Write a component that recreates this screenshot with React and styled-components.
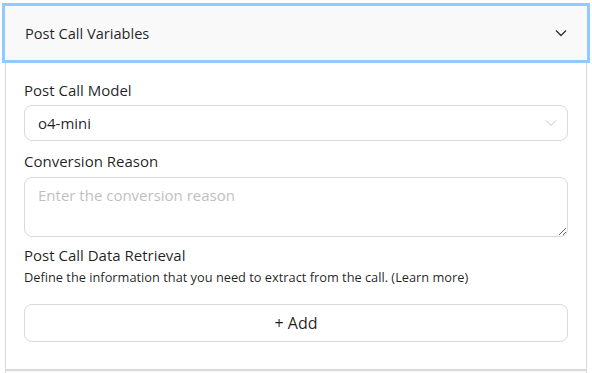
import React from "react";
import styled, { createGlobalStyle } from "styled-components";

const GlobalStyle = createGlobalStyle`
  html, body {
    margin: 0;
    padding: 0;
    background: #ffffff;
  }
  body {
    font-family: "Open Sans", "Noto Sans", sans-serif;
    color: rgba(0, 0, 0, 0.88);
  }
`;

const Page = styled.div`
  padding: 3px 2px 0 2px;
  width: 588px;
`;

const Panel = styled.section`
  border: 1px solid #d9d9d9;
  border-top: none;
  margin: 0 3px;
  background: #fff;
`;

const Header = styled.button`
  display: flex;
  align-items: center;
  justify-content: space-between;
  width: 100%;
  height: 60px;
  padding: 0 20px 0 20px;
  box-sizing: border-box;
  background: #f9f9f9;
  border: 3px solid #91caff;
  font-family: inherit;
  font-size: 14.6px;
  color: rgba(0, 0, 0, 0.88);
  cursor: pointer;

  & > span {
    padding-bottom: 1px;
  }
`;

const Body = styled.div`
  display: flex;
  flex-direction: column;
  padding: 16px 18px 27px 18px;
`;

const Field = styled.div`
  display: flex;
  flex-direction: column;
  margin-bottom: ${(p) => p.$gap}px;
`;

const Label = styled.label`
  font-size: 15px;
  line-height: 22px;
  margin-bottom: 1px;
`;

const Hint = styled.div`
  font-size: 12.8px;
  line-height: 20px;
  margin-bottom: 17px;
`;

const SelectBox = styled.div`
  display: flex;
  align-items: center;
  justify-content: space-between;
  height: 34px;
  margin-top: 3px;
  padding: 0 10px 0 13px;
  border: 1px solid #d9d9d9;
  border-radius: 8px;
  font-size: 15px;
`;

const TextArea = styled.textarea`
  height: 60px;
  margin-top: 4px;
  box-sizing: border-box;
  padding: 7px 13px;
  border: 1px solid #d9d9d9;
  border-radius: 8px;
  font-family: inherit;
  font-size: 15px;
  resize: vertical;
  outline: none;
  &::placeholder {
    color: #bfbfbf;
  }
`;

const AddButton = styled.button`
  height: 38px;
  border: 1px solid #d9d9d9;
  border-radius: 8px;
  background: #fff;
  font-family: inherit;
  font-size: 16px;
  color: rgba(0, 0, 0, 0.88);
  cursor: pointer;
`;

const Below = styled.div`
  height: 6px;
  background: #f9f9f9;
  margin: 0 3px;
  border: 1px solid #d9d9d9;
  border-bottom: none;
`;

const Chevron = ({ color, weight = 1.4 }) => (
  <svg width="12" height="8" viewBox="0 0 12 8" fill="none">
    <path d="M1 1.5 L6 6.5 L11 1.5" stroke={color} strokeWidth={weight} />
  </svg>
);

export default function App() {
  return (
    <Page>
      <GlobalStyle />
      <Header>
        <span>Post Call Variables</span>
        <Chevron color="#333" />
      </Header>
      <Panel>
        <Body>
          <Field $gap={9}>
            <Label>Post Call Model</Label>
            <SelectBox>
              <span>o4-mini</span>
              <Chevron color="#c4c4c4" weight={1} />
            </SelectBox>
          </Field>
          <Field $gap={7}>
            <Label>Conversion Reason</Label>
            <TextArea placeholder="Enter the conversion reason" />
          </Field>
          <Label>Post Call Data Retrieval</Label>
          <Hint>Define the information that you need to extract from the call. (Learn more)</Hint>
          <AddButton>+ Add</AddButton>
        </Body>
      </Panel>
      <Below />
    </Page>
  );
}
